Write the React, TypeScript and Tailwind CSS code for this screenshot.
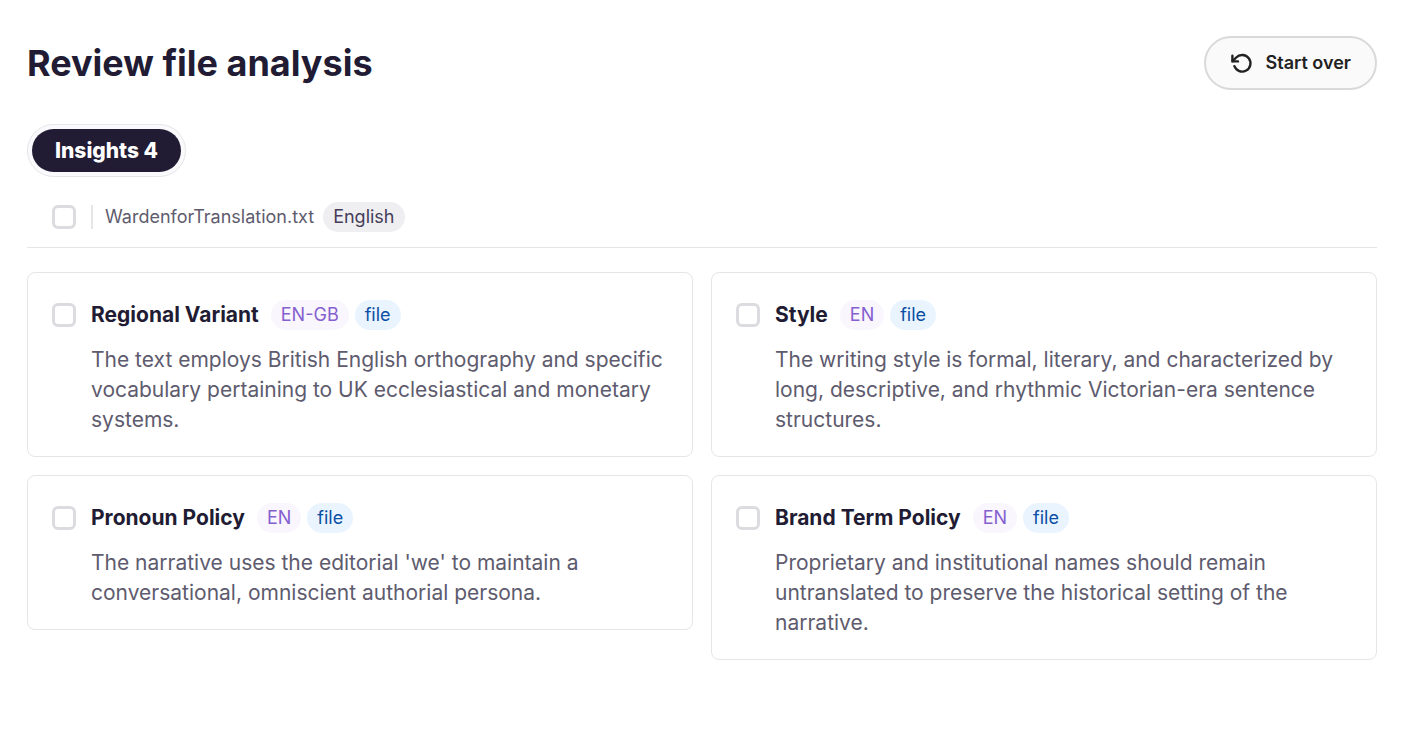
import React from "react";

type Insight = {
  id: string;
  title: string;
  locale: string;
  scope: string;
  text: string;
};

const insights: Insight[] = [
  {
    id: "regional-variant",
    title: "Regional Variant",
    locale: "EN-GB",
    scope: "file",
    text: "The text employs British English orthography and specific vocabulary pertaining to UK ecclesiastical and monetary systems.",
  },
  {
    id: "style",
    title: "Style",
    locale: "EN",
    scope: "file",
    text: "The writing style is formal, literary, and characterized by long, descriptive, and rhythmic Victorian-era sentence structures.",
  },
  {
    id: "pronoun-policy",
    title: "Pronoun Policy",
    locale: "EN",
    scope: "file",
    text: "The narrative uses the editorial 'we' to maintain a conversational, omniscient authorial persona.",
  },
  {
    id: "brand-term-policy",
    title: "Brand Term Policy",
    locale: "EN",
    scope: "file",
    text: "Proprietary and institutional names should remain untranslated to preserve the historical setting of the narrative.",
  },
];

const Checkbox = ({ id }: { id: string }) => (
  <input
    id={id}
    type="checkbox"
    className="size-6 shrink-0 appearance-none rounded-md border-3 border-[#dcdce0] bg-white checked:bg-[#211c33]"
  />
);

const StartOverIcon = () => (
  <svg
    className="size-6"
    viewBox="0 0 24 24"
    fill="none"
    stroke="currentColor"
    strokeWidth="2.4"
    strokeLinecap="round"
    strokeLinejoin="round"
    aria-hidden="true"
  >
    <path d="M2.4 4.8v5.6h5.6" />
    <path d="M2.6 10.2l3.6-3.7A8.3 8.3 0 1 1 4.4 15.2" />
  </svg>
);

const InsightCard = ({ insight }: { insight: Insight }) => (
  <article className="rounded-lg border border-[#e6e6e8] px-6 pt-[27px] pb-[21px]">
    <div className="flex items-center">
      <Checkbox id={insight.id} />
      <label
        htmlFor={insight.id}
        className="ml-[15px] text-[21px] leading-[30px] font-bold"
      >
        {insight.title}
      </label>
      <span className="ml-3 rounded-full bg-[#f9f6fd] px-[10px] text-lg leading-[30px] text-[#8560cf]">
        {insight.locale}
      </span>
      <span className="ml-1.5 rounded-full bg-[#eaf4ff] px-[10px] text-lg leading-[30px] text-[#0a4fa3]">
        {insight.scope}
      </span>
    </div>
    <p className="mt-[15px] pl-[39px] text-[21px] leading-[30px] text-[#5e5b6e]">
      {insight.text}
    </p>
  </article>
);

export default function App() {
  return (
    <main className="px-[27px] py-9 font-['Inter',sans-serif] text-[#211c33]">
      <header className="flex items-center justify-between">
        <h1 className="text-4xl font-bold">Review file analysis</h1>
        <button
          type="button"
          className="flex h-[54px] items-center gap-3 rounded-full border-2 border-[#d9d9d9] bg-[#fafafa] px-6 text-lg font-semibold text-[#222222]"
        >
          <StartOverIcon />
          Start over
        </button>
      </header>

      <div className="mt-[34px] inline-flex rounded-full border border-[#e6e6ea] bg-[#fafafc] p-1">
        <button
          type="button"
          className="rounded-full bg-[#211c33] px-[23px] text-[21px] leading-[43px] font-extrabold text-white"
        >
          Insights 4
        </button>
      </div>

      <div className="mt-[25px] flex items-center border-b border-[#e6e6e8] pb-[15px] pl-[25px]">
        <Checkbox id="source-file" />
        <span className="ml-[15px] h-6 w-0.5 bg-[#e6e6e8]" />
        <label
          htmlFor="source-file"
          className="ml-3 text-lg leading-[30px] text-[#5e5b6e]"
        >
          WardenforTranslation.txt
        </label>
        <span className="ml-[9px] rounded-full bg-[#efeff1] px-[10px] text-lg leading-[30px] text-[#453d59]">
          English
        </span>
      </div>

      <section className="mt-6 grid grid-cols-1 items-start gap-[18px] md:grid-cols-2">
        {insights.map((insight) => (
          <InsightCard key={insight.id} insight={insight} />
        ))}
      </section>
    </main>
  );
}
